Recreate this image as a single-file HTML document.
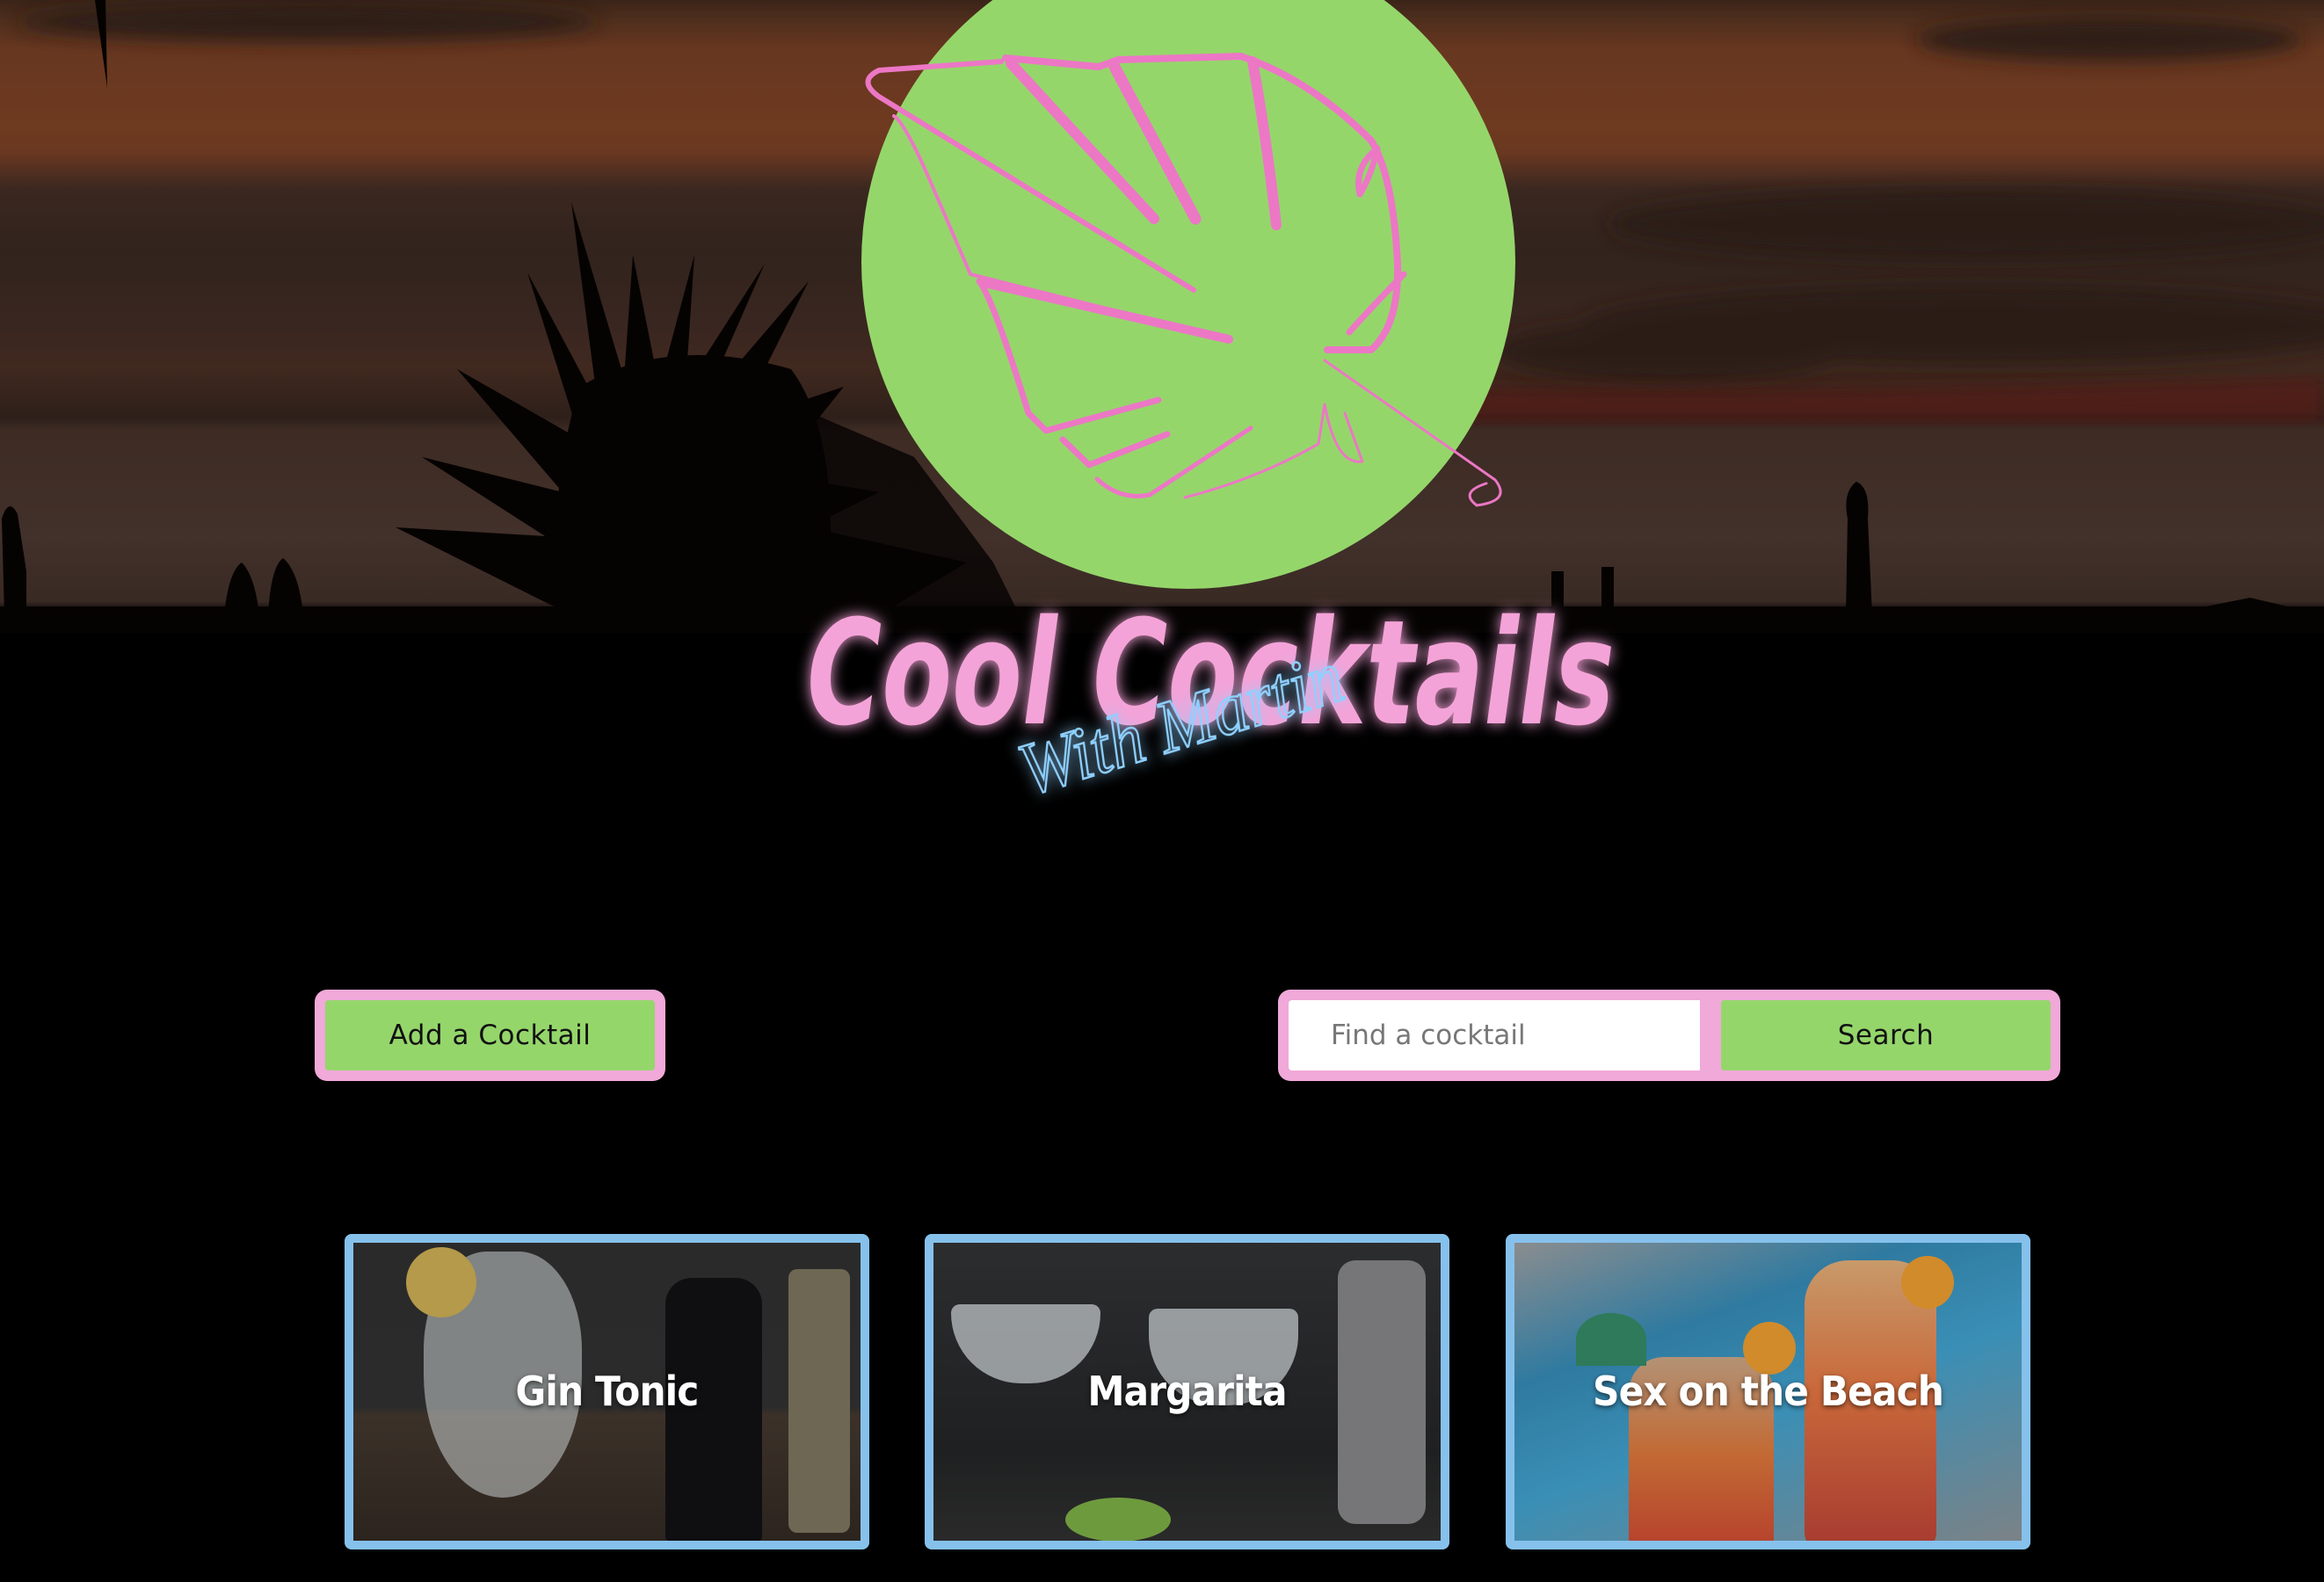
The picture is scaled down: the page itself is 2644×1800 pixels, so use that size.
<!DOCTYPE html>
<html><head><meta charset="utf-8"><style>
html,body{margin:0;padding:0;background:#000;width:2644px;height:1800px;overflow:hidden;font-family:"Liberation Sans","DejaVu Sans",sans-serif}
.abs{position:absolute}
.btnwrap{position:absolute;background:#f0a9d8;border-radius:14px}
.green{position:absolute;background:#95d66b;display:flex;align-items:center;justify-content:center;font-size:31px;color:#111;font-family:"DejaVu Sans",sans-serif;letter-spacing:0.5px}
.card{position:absolute;top:1404px;width:597px;height:359px;background:#86c1ec;border-radius:8px}
.card .img{position:absolute;left:10px;top:10px;right:10px;bottom:10px;overflow:hidden}
.card .lbl{position:absolute;left:0;right:0;top:142px;text-align:center;color:#fff;font-weight:bold;font-size:46px;font-family:"DejaVu Sans","Liberation Sans",sans-serif;letter-spacing:-1px;text-shadow:0 2px 6px rgba(0,0,0,.6);transform:scaleX(.92)}
</style></head><body>
<div class="abs" style="left:0;top:0;width:2644px;height:720px;background:linear-gradient(180deg,#3a2418 0%,#4e2e1d 3%,#683720 8%,#6e3a20 20%,#6a3820 24%,#3a2720 30%,#32231d 40%,#3a2620 52%,#40291f 58%,#2e1f1a 66%,#3d2b24 68%,#42302a 85%,#3a2a24 95%,#000 97%)"></div>
<svg class="abs" style="left:0;top:0" width="2644" height="720">
<defs><filter id="b"><feGaussianBlur stdDeviation="10"/></filter></defs>
<g filter="url(#b)" fill="#2a1d18" opacity=".9">
<ellipse cx="350" cy="25" rx="330" ry="22"/>
<ellipse cx="2400" cy="45" rx="220" ry="25"/>
<ellipse cx="2250" cy="255" rx="420" ry="40"/>
<ellipse cx="2250" cy="370" rx="450" ry="45"/>
<ellipse cx="1900" cy="400" rx="200" ry="35"/>
</g>
<path d="M1650 440 Q2000 450 2644 430 L2644 480 L1640 480Z" fill="#5a1e17" opacity=".7" filter="url(#b)"/>
<g fill="#050302">
<path d="M108 0 L120 0 L122 100 Z"/>
<path d="M640 700 Q620 560 660 440 Q760 380 900 420 Q960 500 940 700 Z"/>
<path d="M650 700 L450 600 L620 610 L480 520 L640 560 L520 420 L660 500 L600 310 L680 460 L650 230 L710 430 L720 290 L750 440 L790 290 L780 440 L870 300 L800 460 L920 320 L840 480 L960 440 L880 540 L1000 560 L920 600 L1100 640 L1000 700 Z"/>
<path d="M900 460 L1040 520 L1130 640 L1160 700 L920 700Z" opacity=".8"/>
<rect x="0" y="690" width="2644" height="30"/>
<path d="M2100 700 L2102 590 Q2096 560 2112 548 Q2128 555 2125 590 L2130 700Z"/>
<path d="M5 700 L2 590 Q10 565 20 585 L30 650 L30 700Z"/>
<path d="M255 700 Q260 650 275 640 Q290 655 295 700Z"/>
<path d="M305 700 Q308 645 322 635 Q340 650 345 700Z"/>
<rect x="1765" y="650" width="14" height="45"/><rect x="1822" y="645" width="14" height="50"/>
<path d="M2510 690 L2560 680 L2644 700Z"/>
</g>
</svg>
<svg class="abs" style="left:0;top:0" width="2644" height="800">
<circle cx="1352" cy="298" r="372" fill="#95d66b"/>
<g fill="none" stroke="#ec77c5" stroke-linecap="round" stroke-linejoin="round">
<path stroke-width="8" d="M1144 66 L1250 76 L1272 68 L1412 64 Q1490 90 1560 160 Q1585 200 1590 300 Q1592 370 1560 398 L1510 398"/>
<path stroke-width="6" d="M1139 70 L1000 80 Q975 92 1000 110 L1358 330"/>
<path stroke-width="4" d="M1017 132 Q1030 140 1060 210 L1104 312 L1398 386"/>
<path stroke-width="7" d="M1114 320 Q1130 340 1170 470 L1190 490 L1318 455"/>
<path stroke-width="7" d="M1209 500 L1239 529 L1328 494"/>
<path stroke-width="5" d="M1248 545 Q1275 570 1308 563 L1423 487"/>
<path stroke-width="3" d="M1348 566 Q1430 545 1500 505 L1507 460 Q1520 530 1550 525 L1530 470"/>
<path stroke-width="3" d="M1507 410 L1701 546 Q1720 570 1680 575 Q1660 560 1691 550"/>
<path stroke-width="12" d="M1150 72 L1313 249"/>
<path stroke-width="13" d="M1268 76 L1360 249"/>
<path stroke-width="12" d="M1425 70 Q1440 150 1452 256"/>
<path stroke-width="7" d="M1567 169 Q1540 190 1547 221 Q1560 200 1567 169"/>
<path stroke-width="7" d="M1597 312 Q1560 350 1535 378"/>
<path stroke-width="10" d="M1120 322 L1398 386"/>
</g>
</svg>
<svg class="abs" style="left:0;top:0" width="2644" height="1000">
<defs><filter id="g" x="-10%" y="-30%" width="120%" height="160%"><feGaussianBlur stdDeviation="8" result="bl"/><feMerge><feMergeNode in="bl"/><feMergeNode in="SourceGraphic"/></feMerge></filter></defs>
<text x="918" y="823" textLength="919" lengthAdjust="spacingAndGlyphs" font-family="DejaVu Sans, sans-serif" font-weight="bold" font-style="italic" font-size="165" fill="#f4a3d8" filter="url(#g)">Cool Cocktails</text>
<text transform="translate(1170,905) rotate(-17)" textLength="380" lengthAdjust="spacingAndGlyphs" font-family="Liberation Serif, serif" font-style="italic" font-size="85" fill="none" stroke="#8fd0ff" stroke-width="2.5" filter="url(#g)">With Martin</text>
</svg>
<div class="btnwrap" style="left:358px;top:1126px;width:399px;height:104px"></div>
<div class="green" style="left:370px;top:1138px;width:375px;height:80px;border-radius:4px">Add a Cocktail</div>
<div class="btnwrap" style="left:1454px;top:1126px;width:890px;height:104px"></div>
<div class="abs" style="left:1466px;top:1138px;width:468px;height:80px;background:#fff;border-radius:4px 0 0 4px;display:flex;align-items:center;padding-left:48px;box-sizing:border-box;font-size:31px;color:#777;font-family:'DejaVu Sans',sans-serif">Find a cocktail</div>
<div class="green" style="left:1958px;top:1138px;width:375px;height:80px;border-radius:4px">Search</div>
<div class="card" style="left:392px"><div class="img" style="background:linear-gradient(180deg,#2a2a2a 0%,#2b2b2b 55%,#3b3129 58%,#2c241e 100%)">
<div class="abs" style="left:80px;top:10px;width:180px;height:280px;border-radius:40% 40% 50% 50%;background:rgba(200,205,205,.55)"></div>
<div class="abs" style="left:60px;top:5px;width:80px;height:80px;border-radius:50%;background:#b49a4a"></div>
<div class="abs" style="left:355px;top:40px;width:110px;height:300px;border-radius:30px 30px 6px 6px;background:#0f0f12"></div>
<div class="abs" style="left:495px;top:30px;width:70px;height:300px;border-radius:10px;background:#6e6753"></div>
<div class="lbl">Gin Tonic</div></div></div>
<div class="card" style="left:1052px"><div class="img" style="background:linear-gradient(180deg,#2c2d2f,#1f2021 70%,#2a2a2a)">
<div class="abs" style="left:20px;top:70px;width:170px;height:90px;border-radius:10px 10px 80px 80px;background:rgba(200,205,208,.7)"></div>
<div class="abs" style="left:245px;top:75px;width:170px;height:110px;border-radius:10px 10px 80px 80px;background:rgba(200,205,208,.7)"></div>
<div class="abs" style="left:460px;top:20px;width:100px;height:300px;border-radius:20px;background:#767678"></div>
<div class="abs" style="left:150px;top:290px;width:120px;height:50px;border-radius:50%;background:#6e9a3e"></div>
<div class="lbl">Margarita</div></div></div>
<div class="card" style="left:1713px"><div class="img" style="background:linear-gradient(160deg,#8a8d8f 0%,#2f7aa0 30%,#3a8fb6 55%,#7b8286 100%)">
<div class="abs" style="left:130px;top:130px;width:165px;height:220px;border-radius:40px 40px 10px 10px;background:linear-gradient(180deg,#b39275,#c26a34 50%,#b5402c)"></div>
<div class="abs" style="left:330px;top:20px;width:150px;height:330px;border-radius:50px 50px 20px 20px;background:linear-gradient(180deg,#c89a6a,#c9683a 45%,#a63a30)"></div>
<div class="abs" style="left:440px;top:15px;width:60px;height:60px;border-radius:50%;background:#d18b2a"></div>
<div class="abs" style="left:260px;top:90px;width:60px;height:60px;border-radius:50%;background:#d18b2a"></div>
<div class="abs" style="left:70px;top:80px;width:80px;height:60px;border-radius:50% 50% 0 0;background:#2e7a5a"></div>
<div class="lbl">Sex on the Beach</div></div></div>
</body></html>
